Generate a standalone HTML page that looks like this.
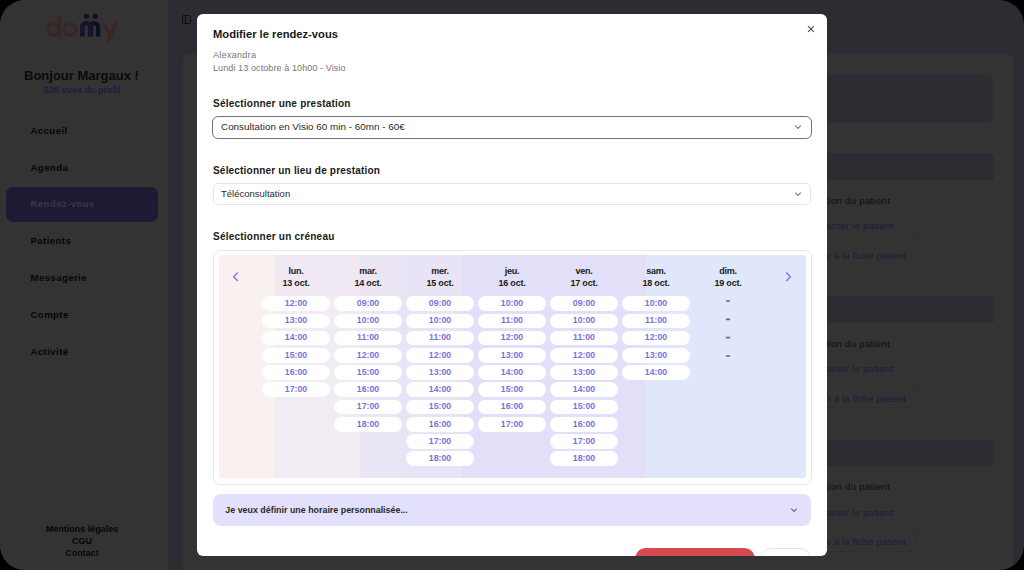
<!DOCTYPE html>
<html><head><meta charset="utf-8"><style>
*{margin:0;padding:0;box-sizing:border-box}
html,body{width:1024px;height:570px;overflow:hidden;background:#000;font-family:"Liberation Sans",sans-serif}
#screen{position:absolute;left:0;top:0;width:1024px;height:570px;border-radius:25px;overflow:hidden;background:#2c2d32}
.a{position:absolute}
.t{position:absolute;white-space:nowrap;line-height:1}
.pill{position:absolute;width:67px;height:15px;border-radius:8px;background:#fff}
</style></head><body>
<div id="screen">
<div class="a" style="left:0;top:0;width:168px;height:570px;background:#333333"></div>
<svg class="a" style="left:40px;top:8px" width="85" height="40" viewBox="40 8 85 40">
<g fill="none" stroke="#3a2527" stroke-width="3.5">
<circle cx="53.5" cy="29.3" r="5.8"/><line x1="59.3" y1="16" x2="59.3" y2="36.6"/>
<circle cx="70.2" cy="29.3" r="5.8"/>
<path d="M103.5 22.5 L110 34.5 M116 22.5 L108 41.5"/>
</g>
<g fill="#121128">
<circle cx="86.5" cy="16.3" r="2.6"/><circle cx="95.2" cy="16.3" r="2.6"/>
<path fill="#0f0f22" d="M88.2 36.6 V27 A6 6 0 0 1 100.2 27 V36.6 H96 V27 A1.45 1.45 0 0 0 93.1 27 V36.6 Z"/>
<path fill="#16152e" d="M80 36.6 V27 A6.15 6.15 0 0 1 92.3 27 V36.6 H87.8 V27 A1.55 1.55 0 0 0 84.7 27 V36.6 Z"/>
</g>
</svg>
<div class="t" style="left:24.00px;top:69.30px;font-size:13px;font-weight:bold;color:#0b0b0b;letter-spacing:0px;">Bonjour Margaux !</div>
<div class="t" style="left:44.00px;top:85.98px;font-size:9px;font-weight:bold;color:#1e1c46;letter-spacing:0px;">526 vues du profil</div>
<div class="a" style="left:5.5px;top:187px;width:152px;height:34.5px;border-radius:7px;background:#1c1b33"></div>
<div class="t" style="left:30.50px;top:125.77px;font-size:9.6px;font-weight:bold;color:#060606;letter-spacing:0.42px;">Accueil</div>
<div class="t" style="left:30.50px;top:162.60px;font-size:9.6px;font-weight:bold;color:#060606;letter-spacing:0.42px;">Agenda</div>
<div class="t" style="left:30.50px;top:199.43px;font-size:9.6px;font-weight:bold;color:#383746;letter-spacing:0.42px;">Rendez-vous</div>
<div class="t" style="left:30.50px;top:236.26px;font-size:9.6px;font-weight:bold;color:#060606;letter-spacing:0.42px;">Patients</div>
<div class="t" style="left:30.50px;top:273.09px;font-size:9.6px;font-weight:bold;color:#060606;letter-spacing:0.42px;">Messagerie</div>
<div class="t" style="left:30.50px;top:309.92px;font-size:9.6px;font-weight:bold;color:#060606;letter-spacing:0.42px;">Compte</div>
<div class="t" style="left:30.50px;top:346.75px;font-size:9.6px;font-weight:bold;color:#060606;letter-spacing:0.42px;">Activité</div>
<div class="t" style="left:32.00px;width:100px;text-align:center;top:524.58px;font-size:9px;font-weight:bold;color:#060606;letter-spacing:0px">Mentions légales</div>
<div class="t" style="left:32.00px;width:100px;text-align:center;top:536.78px;font-size:9px;font-weight:bold;color:#060606;letter-spacing:0px">CGU</div>
<div class="t" style="left:32.00px;width:100px;text-align:center;top:548.98px;font-size:9px;font-weight:bold;color:#060606;letter-spacing:0px">Contact</div>
<div class="a" style="left:182px;top:15px;width:8.5px;height:8.5px;border:1px solid #0e0f12;border-radius:1.5px"></div>
<div class="a" style="left:185px;top:15px;width:1px;height:8.5px;background:#0e0f12"></div>
<div class="a" style="left:183px;top:54px;width:830px;height:520px;background:#333333;border-radius:6px"></div>
<div class="a" style="left:200px;top:74px;width:793px;height:49px;background:#2c2d32;border-radius:6px"></div>
<div class="a" style="left:200px;top:153.00px;width:793.5px;height:26.5px;background:#2c2d32;border-radius:6px 6px 0 0"></div>
<div class="a" style="left:200px;top:280.50px;width:787px;height:1px;background:#2f2f2f"></div>
<div class="t" style="left:825.50px;top:195.76px;font-size:9.5px;font-weight:normal;color:#0e0e0e;letter-spacing:0.33px;">tion du patient</div>
<div class="a" style="left:700px;top:214.50px;width:215.5px;height:21.5px;border:1px solid #303030;border-radius:8px"></div>
<div class="a" style="left:700px;top:244.00px;width:215.5px;height:21px;border:1px solid #303030;border-radius:8px"></div>
<div class="t" style="left:826.50px;top:220.96px;font-size:9.5px;font-weight:normal;color:#1c1b3a;letter-spacing:0.3px;">acter le patient</div>
<div class="t" style="left:828.00px;top:250.56px;font-size:9.5px;font-weight:normal;color:#1c1b3a;letter-spacing:0.15px;">r à la fiche patient</div>
<div class="a" style="left:200px;top:296.30px;width:793.5px;height:26.5px;background:#2c2d32;border-radius:6px 6px 0 0"></div>
<div class="a" style="left:200px;top:423.80px;width:787px;height:1px;background:#2f2f2f"></div>
<div class="t" style="left:825.50px;top:339.06px;font-size:9.5px;font-weight:normal;color:#0e0e0e;letter-spacing:0.33px;">tion du patient</div>
<div class="a" style="left:700px;top:357.80px;width:215.5px;height:21.5px;border:1px solid #303030;border-radius:8px"></div>
<div class="a" style="left:700px;top:387.30px;width:215.5px;height:21px;border:1px solid #303030;border-radius:8px"></div>
<div class="t" style="left:826.50px;top:364.26px;font-size:9.5px;font-weight:normal;color:#1c1b3a;letter-spacing:0.3px;">acter le patient</div>
<div class="t" style="left:828.00px;top:393.86px;font-size:9.5px;font-weight:normal;color:#1c1b3a;letter-spacing:0.15px;">r à la fiche patient</div>
<div class="a" style="left:200px;top:439.60px;width:793.5px;height:26.5px;background:#2c2d32;border-radius:6px 6px 0 0"></div>
<div class="a" style="left:200px;top:567.10px;width:787px;height:1px;background:#2f2f2f"></div>
<div class="t" style="left:825.50px;top:482.36px;font-size:9.5px;font-weight:normal;color:#0e0e0e;letter-spacing:0.33px;">tion du patient</div>
<div class="a" style="left:700px;top:501.10px;width:215.5px;height:21.5px;border:1px solid #303030;border-radius:8px"></div>
<div class="a" style="left:700px;top:530.60px;width:215.5px;height:21px;border:1px solid #303030;border-radius:8px"></div>
<div class="t" style="left:826.50px;top:507.56px;font-size:9.5px;font-weight:normal;color:#1c1b3a;letter-spacing:0.3px;">acter le patient</div>
<div class="t" style="left:828.00px;top:537.16px;font-size:9.5px;font-weight:normal;color:#1c1b3a;letter-spacing:0.15px;">r à la fiche patient</div>
<div class="a" style="left:197.2px;top:13.8px;width:629.4px;height:542px;background:#fff;border-radius:6px;overflow:hidden">
<div class="a" style="left:-197.2px;top:-13.8px;width:1024px;height:570px">
<svg class="a" style="left:806px;top:24px" width="10" height="10" viewBox="0 0 10 10"><path d="M2.1 2.1 L7.9 7.9 M7.9 2.1 L2.1 7.9" stroke="#555" stroke-width="1.25"/></svg>
<div class="t" style="left:213.00px;top:28.82px;font-size:11.2px;font-weight:bold;color:#161616;letter-spacing:0px;">Modifier le rendez-vous</div>
<div class="t" style="left:213.00px;top:51.48px;font-size:9px;font-weight:normal;color:#767676;letter-spacing:0.3px;">Alexandra</div>
<div class="t" style="left:213.00px;top:63.68px;font-size:9px;font-weight:normal;color:#767676;letter-spacing:0.1px;">Lundi 13 octobre à 10h00 - Visio</div>
<div class="t" style="left:213.00px;top:98.99px;font-size:10.05px;font-weight:bold;color:#1a1a1a;letter-spacing:0.2px;">Sélectionner une prestation</div>
<div class="a" style="left:212px;top:115.6px;width:600px;height:23.2px;border:1px solid #747474;border-radius:6px"></div>
<div class="t" style="left:221.00px;top:122.02px;font-size:9.9px;font-weight:normal;color:#2a2a2a;letter-spacing:0px;">Consultation en Visio 60 min - 60mn - 60€</div>
<svg class="a" style="left:794px;top:124.3px" width="8" height="6" viewBox="0 0 8 6"><path d="M1.2 1.6 L4 4.4 L6.8 1.6" fill="none" stroke="#777" stroke-width="1.1"/></svg>
<div class="t" style="left:213.00px;top:165.69px;font-size:10.05px;font-weight:bold;color:#1a1a1a;letter-spacing:0.17px;">Sélectionner un lieu de prestation</div>
<div class="a" style="left:213px;top:183px;width:598px;height:22px;border:1px solid #e6e6e6;border-radius:4px"></div>
<div class="t" style="left:221.00px;top:188.56px;font-size:9.5px;font-weight:normal;color:#2a2a2a;letter-spacing:0px;">Téléconsultation</div>
<svg class="a" style="left:794px;top:190.7px" width="8" height="6" viewBox="0 0 8 6"><path d="M1.2 1.6 L4 4.4 L6.8 1.6" fill="none" stroke="#777" stroke-width="1.1"/></svg>
<div class="t" style="left:213.00px;top:231.99px;font-size:10.05px;font-weight:bold;color:#1a1a1a;letter-spacing:0.21px;">Sélectionner un créneau</div>
<div class="a" style="left:213px;top:249.5px;width:598.5px;height:235px;border:1.2px solid #e8e8e8;border-radius:7px"></div>
<div class="a" style="left:218.6px;top:254.8px;width:587px;height:223px;border-radius:3px;overflow:hidden">
<div class="a" style="left:0.00px;top:0;width:56.40px;height:39.5px;background:#f9f0f0"></div>
<div class="a" style="left:0.00px;top:39.5px;width:56.40px;height:184px;background:#f9f0f0"></div>
<div class="a" style="left:56.40px;top:0;width:85.50px;height:39.5px;background:#f0e9f3"></div>
<div class="a" style="left:56.40px;top:39.5px;width:85.50px;height:184px;background:#f1ebf3"></div>
<div class="a" style="left:141.90px;top:0;width:41.00px;height:39.5px;background:#ebe5f4"></div>
<div class="a" style="left:141.90px;top:39.5px;width:41.00px;height:184px;background:#ebe6f5"></div>
<div class="a" style="left:182.90px;top:0;width:61.00px;height:39.5px;background:#e8e4f6"></div>
<div class="a" style="left:182.90px;top:39.5px;width:61.00px;height:184px;background:#e8e4f6"></div>
<div class="a" style="left:243.90px;top:0;width:183.00px;height:39.5px;background:#e2e0f9"></div>
<div class="a" style="left:243.90px;top:39.5px;width:183.00px;height:184px;background:#e2e0f9"></div>
<div class="a" style="left:426.90px;top:0;width:160.50px;height:39.5px;background:#e0e7fa"></div>
<div class="a" style="left:426.90px;top:39.5px;width:160.50px;height:184px;background:#e0e7fa"></div>
</div>
<svg class="a" style="left:232px;top:271px" width="8" height="11" viewBox="0 0 8 11"><path d="M5.8 1.6 L1.6 5.8 L5.8 10" fill="none" stroke="#7f76ea" stroke-width="1.4"/></svg>
<svg class="a" style="left:784px;top:271px" width="8" height="11" viewBox="0 0 8 11"><path d="M2.2 1.6 L6.4 5.8 L2.2 10" fill="none" stroke="#7f76ea" stroke-width="1.4"/></svg>
<div class="t" style="left:246.00px;width:100px;text-align:center;top:266.78px;font-size:9px;font-weight:bold;color:#1a1a1a;letter-spacing:-0.2px">lun.</div>
<div class="t" style="left:246.00px;width:100px;text-align:center;top:278.68px;font-size:9px;font-weight:bold;color:#1a1a1a;letter-spacing:-0.2px">13 oct.</div>
<div class="pill" style="left:262.40px;top:296.30px;width:67.2px;height:14.7px"></div>
<div class="t" style="left:246.00px;width:100px;text-align:center;top:299.05px;font-size:8.8px;font-weight:bold;color:#7b70df;letter-spacing:0px">12:00</div>
<div class="pill" style="left:262.40px;top:313.52px;width:67.2px;height:14.7px"></div>
<div class="t" style="left:246.00px;width:100px;text-align:center;top:316.27px;font-size:8.8px;font-weight:bold;color:#7b70df;letter-spacing:0px">13:00</div>
<div class="pill" style="left:262.40px;top:330.74px;width:67.2px;height:14.7px"></div>
<div class="t" style="left:246.00px;width:100px;text-align:center;top:333.49px;font-size:8.8px;font-weight:bold;color:#7b70df;letter-spacing:0px">14:00</div>
<div class="pill" style="left:262.40px;top:347.96px;width:67.2px;height:14.7px"></div>
<div class="t" style="left:246.00px;width:100px;text-align:center;top:350.71px;font-size:8.8px;font-weight:bold;color:#7b70df;letter-spacing:0px">15:00</div>
<div class="pill" style="left:262.40px;top:365.18px;width:67.2px;height:14.7px"></div>
<div class="t" style="left:246.00px;width:100px;text-align:center;top:367.93px;font-size:8.8px;font-weight:bold;color:#7b70df;letter-spacing:0px">16:00</div>
<div class="pill" style="left:262.40px;top:382.40px;width:67.2px;height:14.7px"></div>
<div class="t" style="left:246.00px;width:100px;text-align:center;top:385.15px;font-size:8.8px;font-weight:bold;color:#7b70df;letter-spacing:0px">17:00</div>
<div class="t" style="left:318.00px;width:100px;text-align:center;top:266.78px;font-size:9px;font-weight:bold;color:#1a1a1a;letter-spacing:-0.2px">mar.</div>
<div class="t" style="left:318.00px;width:100px;text-align:center;top:278.68px;font-size:9px;font-weight:bold;color:#1a1a1a;letter-spacing:-0.2px">14 oct.</div>
<div class="pill" style="left:334.40px;top:296.30px;width:67.2px;height:14.7px"></div>
<div class="t" style="left:318.00px;width:100px;text-align:center;top:299.05px;font-size:8.8px;font-weight:bold;color:#7b70df;letter-spacing:0px">09:00</div>
<div class="pill" style="left:334.40px;top:313.52px;width:67.2px;height:14.7px"></div>
<div class="t" style="left:318.00px;width:100px;text-align:center;top:316.27px;font-size:8.8px;font-weight:bold;color:#7b70df;letter-spacing:0px">10:00</div>
<div class="pill" style="left:334.40px;top:330.74px;width:67.2px;height:14.7px"></div>
<div class="t" style="left:318.00px;width:100px;text-align:center;top:333.49px;font-size:8.8px;font-weight:bold;color:#7b70df;letter-spacing:0px">11:00</div>
<div class="pill" style="left:334.40px;top:347.96px;width:67.2px;height:14.7px"></div>
<div class="t" style="left:318.00px;width:100px;text-align:center;top:350.71px;font-size:8.8px;font-weight:bold;color:#7b70df;letter-spacing:0px">12:00</div>
<div class="pill" style="left:334.40px;top:365.18px;width:67.2px;height:14.7px"></div>
<div class="t" style="left:318.00px;width:100px;text-align:center;top:367.93px;font-size:8.8px;font-weight:bold;color:#7b70df;letter-spacing:0px">15:00</div>
<div class="pill" style="left:334.40px;top:382.40px;width:67.2px;height:14.7px"></div>
<div class="t" style="left:318.00px;width:100px;text-align:center;top:385.15px;font-size:8.8px;font-weight:bold;color:#7b70df;letter-spacing:0px">16:00</div>
<div class="pill" style="left:334.40px;top:399.62px;width:67.2px;height:14.7px"></div>
<div class="t" style="left:318.00px;width:100px;text-align:center;top:402.37px;font-size:8.8px;font-weight:bold;color:#7b70df;letter-spacing:0px">17:00</div>
<div class="pill" style="left:334.40px;top:416.84px;width:67.2px;height:14.7px"></div>
<div class="t" style="left:318.00px;width:100px;text-align:center;top:419.59px;font-size:8.8px;font-weight:bold;color:#7b70df;letter-spacing:0px">18:00</div>
<div class="t" style="left:390.00px;width:100px;text-align:center;top:266.78px;font-size:9px;font-weight:bold;color:#1a1a1a;letter-spacing:-0.2px">mer.</div>
<div class="t" style="left:390.00px;width:100px;text-align:center;top:278.68px;font-size:9px;font-weight:bold;color:#1a1a1a;letter-spacing:-0.2px">15 oct.</div>
<div class="pill" style="left:406.40px;top:296.30px;width:67.2px;height:14.7px"></div>
<div class="t" style="left:390.00px;width:100px;text-align:center;top:299.05px;font-size:8.8px;font-weight:bold;color:#7b70df;letter-spacing:0px">09:00</div>
<div class="pill" style="left:406.40px;top:313.52px;width:67.2px;height:14.7px"></div>
<div class="t" style="left:390.00px;width:100px;text-align:center;top:316.27px;font-size:8.8px;font-weight:bold;color:#7b70df;letter-spacing:0px">10:00</div>
<div class="pill" style="left:406.40px;top:330.74px;width:67.2px;height:14.7px"></div>
<div class="t" style="left:390.00px;width:100px;text-align:center;top:333.49px;font-size:8.8px;font-weight:bold;color:#7b70df;letter-spacing:0px">11:00</div>
<div class="pill" style="left:406.40px;top:347.96px;width:67.2px;height:14.7px"></div>
<div class="t" style="left:390.00px;width:100px;text-align:center;top:350.71px;font-size:8.8px;font-weight:bold;color:#7b70df;letter-spacing:0px">12:00</div>
<div class="pill" style="left:406.40px;top:365.18px;width:67.2px;height:14.7px"></div>
<div class="t" style="left:390.00px;width:100px;text-align:center;top:367.93px;font-size:8.8px;font-weight:bold;color:#7b70df;letter-spacing:0px">13:00</div>
<div class="pill" style="left:406.40px;top:382.40px;width:67.2px;height:14.7px"></div>
<div class="t" style="left:390.00px;width:100px;text-align:center;top:385.15px;font-size:8.8px;font-weight:bold;color:#7b70df;letter-spacing:0px">14:00</div>
<div class="pill" style="left:406.40px;top:399.62px;width:67.2px;height:14.7px"></div>
<div class="t" style="left:390.00px;width:100px;text-align:center;top:402.37px;font-size:8.8px;font-weight:bold;color:#7b70df;letter-spacing:0px">15:00</div>
<div class="pill" style="left:406.40px;top:416.84px;width:67.2px;height:14.7px"></div>
<div class="t" style="left:390.00px;width:100px;text-align:center;top:419.59px;font-size:8.8px;font-weight:bold;color:#7b70df;letter-spacing:0px">16:00</div>
<div class="pill" style="left:406.40px;top:434.06px;width:67.2px;height:14.7px"></div>
<div class="t" style="left:390.00px;width:100px;text-align:center;top:436.81px;font-size:8.8px;font-weight:bold;color:#7b70df;letter-spacing:0px">17:00</div>
<div class="pill" style="left:406.40px;top:451.28px;width:67.2px;height:14.7px"></div>
<div class="t" style="left:390.00px;width:100px;text-align:center;top:454.03px;font-size:8.8px;font-weight:bold;color:#7b70df;letter-spacing:0px">18:00</div>
<div class="t" style="left:462.00px;width:100px;text-align:center;top:266.78px;font-size:9px;font-weight:bold;color:#1a1a1a;letter-spacing:-0.2px">jeu.</div>
<div class="t" style="left:462.00px;width:100px;text-align:center;top:278.68px;font-size:9px;font-weight:bold;color:#1a1a1a;letter-spacing:-0.2px">16 oct.</div>
<div class="pill" style="left:478.40px;top:296.30px;width:67.2px;height:14.7px"></div>
<div class="t" style="left:462.00px;width:100px;text-align:center;top:299.05px;font-size:8.8px;font-weight:bold;color:#7b70df;letter-spacing:0px">10:00</div>
<div class="pill" style="left:478.40px;top:313.52px;width:67.2px;height:14.7px"></div>
<div class="t" style="left:462.00px;width:100px;text-align:center;top:316.27px;font-size:8.8px;font-weight:bold;color:#7b70df;letter-spacing:0px">11:00</div>
<div class="pill" style="left:478.40px;top:330.74px;width:67.2px;height:14.7px"></div>
<div class="t" style="left:462.00px;width:100px;text-align:center;top:333.49px;font-size:8.8px;font-weight:bold;color:#7b70df;letter-spacing:0px">12:00</div>
<div class="pill" style="left:478.40px;top:347.96px;width:67.2px;height:14.7px"></div>
<div class="t" style="left:462.00px;width:100px;text-align:center;top:350.71px;font-size:8.8px;font-weight:bold;color:#7b70df;letter-spacing:0px">13:00</div>
<div class="pill" style="left:478.40px;top:365.18px;width:67.2px;height:14.7px"></div>
<div class="t" style="left:462.00px;width:100px;text-align:center;top:367.93px;font-size:8.8px;font-weight:bold;color:#7b70df;letter-spacing:0px">14:00</div>
<div class="pill" style="left:478.40px;top:382.40px;width:67.2px;height:14.7px"></div>
<div class="t" style="left:462.00px;width:100px;text-align:center;top:385.15px;font-size:8.8px;font-weight:bold;color:#7b70df;letter-spacing:0px">15:00</div>
<div class="pill" style="left:478.40px;top:399.62px;width:67.2px;height:14.7px"></div>
<div class="t" style="left:462.00px;width:100px;text-align:center;top:402.37px;font-size:8.8px;font-weight:bold;color:#7b70df;letter-spacing:0px">16:00</div>
<div class="pill" style="left:478.40px;top:416.84px;width:67.2px;height:14.7px"></div>
<div class="t" style="left:462.00px;width:100px;text-align:center;top:419.59px;font-size:8.8px;font-weight:bold;color:#7b70df;letter-spacing:0px">17:00</div>
<div class="t" style="left:534.00px;width:100px;text-align:center;top:266.78px;font-size:9px;font-weight:bold;color:#1a1a1a;letter-spacing:-0.2px">ven.</div>
<div class="t" style="left:534.00px;width:100px;text-align:center;top:278.68px;font-size:9px;font-weight:bold;color:#1a1a1a;letter-spacing:-0.2px">17 oct.</div>
<div class="pill" style="left:550.40px;top:296.30px;width:67.2px;height:14.7px"></div>
<div class="t" style="left:534.00px;width:100px;text-align:center;top:299.05px;font-size:8.8px;font-weight:bold;color:#7b70df;letter-spacing:0px">09:00</div>
<div class="pill" style="left:550.40px;top:313.52px;width:67.2px;height:14.7px"></div>
<div class="t" style="left:534.00px;width:100px;text-align:center;top:316.27px;font-size:8.8px;font-weight:bold;color:#7b70df;letter-spacing:0px">10:00</div>
<div class="pill" style="left:550.40px;top:330.74px;width:67.2px;height:14.7px"></div>
<div class="t" style="left:534.00px;width:100px;text-align:center;top:333.49px;font-size:8.8px;font-weight:bold;color:#7b70df;letter-spacing:0px">11:00</div>
<div class="pill" style="left:550.40px;top:347.96px;width:67.2px;height:14.7px"></div>
<div class="t" style="left:534.00px;width:100px;text-align:center;top:350.71px;font-size:8.8px;font-weight:bold;color:#7b70df;letter-spacing:0px">12:00</div>
<div class="pill" style="left:550.40px;top:365.18px;width:67.2px;height:14.7px"></div>
<div class="t" style="left:534.00px;width:100px;text-align:center;top:367.93px;font-size:8.8px;font-weight:bold;color:#7b70df;letter-spacing:0px">13:00</div>
<div class="pill" style="left:550.40px;top:382.40px;width:67.2px;height:14.7px"></div>
<div class="t" style="left:534.00px;width:100px;text-align:center;top:385.15px;font-size:8.8px;font-weight:bold;color:#7b70df;letter-spacing:0px">14:00</div>
<div class="pill" style="left:550.40px;top:399.62px;width:67.2px;height:14.7px"></div>
<div class="t" style="left:534.00px;width:100px;text-align:center;top:402.37px;font-size:8.8px;font-weight:bold;color:#7b70df;letter-spacing:0px">15:00</div>
<div class="pill" style="left:550.40px;top:416.84px;width:67.2px;height:14.7px"></div>
<div class="t" style="left:534.00px;width:100px;text-align:center;top:419.59px;font-size:8.8px;font-weight:bold;color:#7b70df;letter-spacing:0px">16:00</div>
<div class="pill" style="left:550.40px;top:434.06px;width:67.2px;height:14.7px"></div>
<div class="t" style="left:534.00px;width:100px;text-align:center;top:436.81px;font-size:8.8px;font-weight:bold;color:#7b70df;letter-spacing:0px">17:00</div>
<div class="pill" style="left:550.40px;top:451.28px;width:67.2px;height:14.7px"></div>
<div class="t" style="left:534.00px;width:100px;text-align:center;top:454.03px;font-size:8.8px;font-weight:bold;color:#7b70df;letter-spacing:0px">18:00</div>
<div class="t" style="left:606.00px;width:100px;text-align:center;top:266.78px;font-size:9px;font-weight:bold;color:#1a1a1a;letter-spacing:-0.2px">sam.</div>
<div class="t" style="left:606.00px;width:100px;text-align:center;top:278.68px;font-size:9px;font-weight:bold;color:#1a1a1a;letter-spacing:-0.2px">18 oct.</div>
<div class="pill" style="left:622.40px;top:296.30px;width:67.2px;height:14.7px"></div>
<div class="t" style="left:606.00px;width:100px;text-align:center;top:299.05px;font-size:8.8px;font-weight:bold;color:#7b70df;letter-spacing:0px">10:00</div>
<div class="pill" style="left:622.40px;top:313.52px;width:67.2px;height:14.7px"></div>
<div class="t" style="left:606.00px;width:100px;text-align:center;top:316.27px;font-size:8.8px;font-weight:bold;color:#7b70df;letter-spacing:0px">11:00</div>
<div class="pill" style="left:622.40px;top:330.74px;width:67.2px;height:14.7px"></div>
<div class="t" style="left:606.00px;width:100px;text-align:center;top:333.49px;font-size:8.8px;font-weight:bold;color:#7b70df;letter-spacing:0px">12:00</div>
<div class="pill" style="left:622.40px;top:347.96px;width:67.2px;height:14.7px"></div>
<div class="t" style="left:606.00px;width:100px;text-align:center;top:350.71px;font-size:8.8px;font-weight:bold;color:#7b70df;letter-spacing:0px">13:00</div>
<div class="pill" style="left:622.40px;top:365.18px;width:67.2px;height:14.7px"></div>
<div class="t" style="left:606.00px;width:100px;text-align:center;top:367.93px;font-size:8.8px;font-weight:bold;color:#7b70df;letter-spacing:0px">14:00</div>
<div class="t" style="left:678.00px;width:100px;text-align:center;top:266.78px;font-size:9px;font-weight:bold;color:#1a1a1a;letter-spacing:-0.2px">dim.</div>
<div class="t" style="left:678.00px;width:100px;text-align:center;top:278.68px;font-size:9px;font-weight:bold;color:#1a1a1a;letter-spacing:-0.2px">19 oct.</div>
<svg class="a" style="left:720px;top:295px" width="16" height="66" viewBox="720 295 16 66"><rect x="725.9" y="300.20" width="4.2" height="1.6" rx="0.6" fill="#6a6a74"/><rect x="725.9" y="318.60" width="4.2" height="1.6" rx="0.6" fill="#6a6a74"/><rect x="725.9" y="336.80" width="4.2" height="1.6" rx="0.6" fill="#6a6a74"/><rect x="725.9" y="355.20" width="4.2" height="1.6" rx="0.6" fill="#6a6a74"/></svg>
<div class="a" style="left:212.7px;top:494px;width:598.5px;height:32px;background:#e2e0fb;border-radius:8px"></div>
<div class="t" style="left:225.30px;top:506.17px;font-size:8.9px;font-weight:bold;color:#2a2a2a;letter-spacing:0px;">Je veux définir une horaire personnalisée...</div>
<svg class="a" style="left:789.5px;top:507px" width="8" height="6" viewBox="0 0 8 6"><path d="M1.2 1.6 L4 4.4 L6.8 1.6" fill="none" stroke="#666" stroke-width="1.1"/></svg>
<div class="a" style="left:635.2px;top:547.8px;width:119.8px;height:24px;background:#d54a50;border-radius:11px"></div>
<div class="a" style="left:760px;top:547.8px;width:51px;height:24px;background:#fff;border:1px solid #e3e3e3;border-radius:11px"></div>
</div></div>
</div>
</body></html>
